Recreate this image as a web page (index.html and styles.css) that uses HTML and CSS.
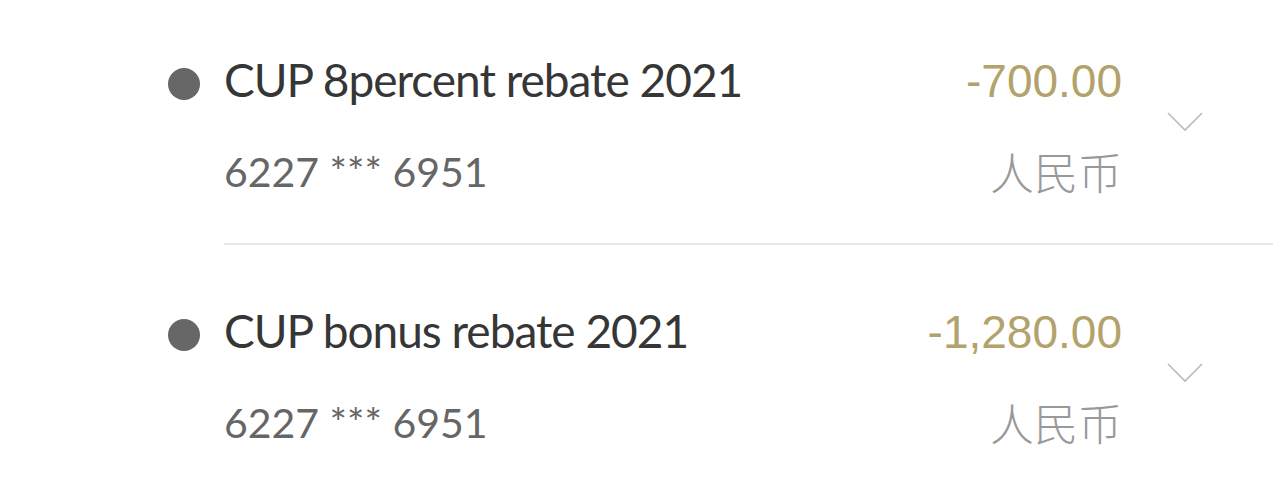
FILE: index.html
```html
<!DOCTYPE html>
<html lang="zh-CN">
<head>
    <meta charset="UTF-8">
    <meta name="viewport" content="width=device-width, initial-scale=1.0">
    <title>Rebates</title>
    <link rel="stylesheet" href="styles.css">
</head>
<body>

<ul class="list">
    <li class="item">
        <span class="dot"></span>
        <div class="body">
            <div class="info">
                <div class="title">CUP 8percent rebate 2021</div>
                <div class="card">6227 *** 6951</div>
            </div>
            <div class="money">
                <div class="amount">-700.00</div>
                <div class="currency">人民币</div>
            </div>
            <svg class="chevron" width="36" height="20" viewBox="0 0 36 20">
                <polyline points="1,1 18,18 35,1" fill="none" stroke="#bbb" stroke-width="1.6"/>
            </svg>
        </div>
    </li>
    <li class="item">
        <span class="dot"></span>
        <div class="body">
            <div class="info">
                <div class="title">CUP bonus rebate 2021</div>
                <div class="card">6227 *** 6951</div>
            </div>
            <div class="money">
                <div class="amount">-1,280.00</div>
                <div class="currency">人民币</div>
            </div>
            <svg class="chevron" width="36" height="20" viewBox="0 0 36 20">
                <polyline points="1,1 18,18 35,1" fill="none" stroke="#bbb" stroke-width="1.6"/>
            </svg>
        </div>
    </li>
</ul>

</body>
</html>
```

FILE: styles.css
```css
body {
    margin: 0;
    background-color: #fff;
    font-family: Lato, "Liberation Sans", sans-serif;
}
/* list is scrolled a little, first row starts just above the top */
.list {
    list-style: none;
    margin: -6px 0 0 0;
    padding: 0;
}
.item {
    display: flex;
    align-items: flex-start;
    padding-left: 168px;
}
.dot {
    width: 32px;
    height: 32px;
    border-radius: 50%;
    background-color: #676767;
    margin-top: 74px;
    margin-right: 24px;
    flex-shrink: 0;
}
.body {
    flex: 1;
    display: flex;
    align-items: center;
    padding: 56px 70px 41px 0;
    border-bottom: 2px solid #e8e8e8;
}
.info {
    flex: 1;
    display: grid;
    row-gap: 32px;
}
.title {
    font-size: 46px;
    line-height: 60px;
    letter-spacing: -1px;
    color: #363636;
}
.card {
    font-size: 41px;
    line-height: 60px;
    color: #666;
}
.money {
    display: grid;
    row-gap: 30px;
    text-align: right;
}
.amount {
    font-family: "Liberation Sans", sans-serif;
    font-size: 46px;
    line-height: 60px;
    color: #b2a26c;
}
.currency {
    font-family: "Noto Sans CJK SC", sans-serif;
    font-weight: 300;
    font-size: 44px;
    line-height: 60px;
    color: #999;
}
.chevron {
    margin-left: 45px;
    margin-bottom: 8px;
}
```
